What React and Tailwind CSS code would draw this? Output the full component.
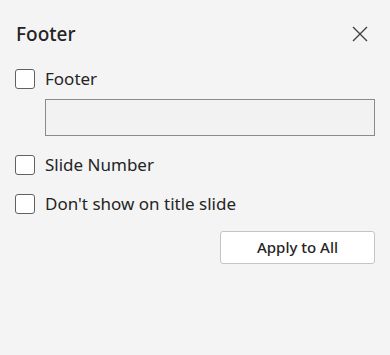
import React from "react";

function Check({ label }) {
  return (
    <label className="flex items-center gap-[10px] h-5">
      <span className="w-5 h-5 shrink-0 rounded-[3px] border border-[#616161] bg-white" />
      <span className="text-[17px] text-[#242424] leading-5">{label}</span>
    </label>
  );
}

export default function App() {
  return (
    <div
      className="w-[390px] h-[355px] bg-[#f4f4f4] pl-[15px] pr-[15px] pt-[20px]"
      style={{ fontFamily: '"Noto Sans", "Open Sans", sans-serif' }}
    >
      <div className="flex items-center justify-between h-[28px]">
        <h1 className="pl-px text-[19px] font-medium text-[#242424] leading-7">Footer</h1>
        <svg width="16" height="16" viewBox="0 0 16 16" className="mr-[7px]">
          <path d="M1 1L15 15M15 1L1 15" stroke="#424242" strokeWidth="1.4" />
        </svg>
      </div>

      <div className="mt-[21px] flex flex-col">
        <Check label="Footer" />
        <input
          type="text"
          className="ml-[30px] mt-[10px] h-[37px] border border-[#8a8a8a] bg-[#f2f2f2] outline-none"
        />
        <div className="mt-[19px]">
          <Check label="Slide Number" />
        </div>
        <div className="mt-[19px]">
          <Check label="Don't show on title slide" />
        </div>
        <div className="mt-[17px] flex justify-end">
          <button className="w-[155px] h-[33px] rounded-[3px] border border-[#c4c4c4] bg-white text-[15px] font-medium text-[#242424]">
            Apply to All
          </button>
        </div>
      </div>
    </div>
  );
}
